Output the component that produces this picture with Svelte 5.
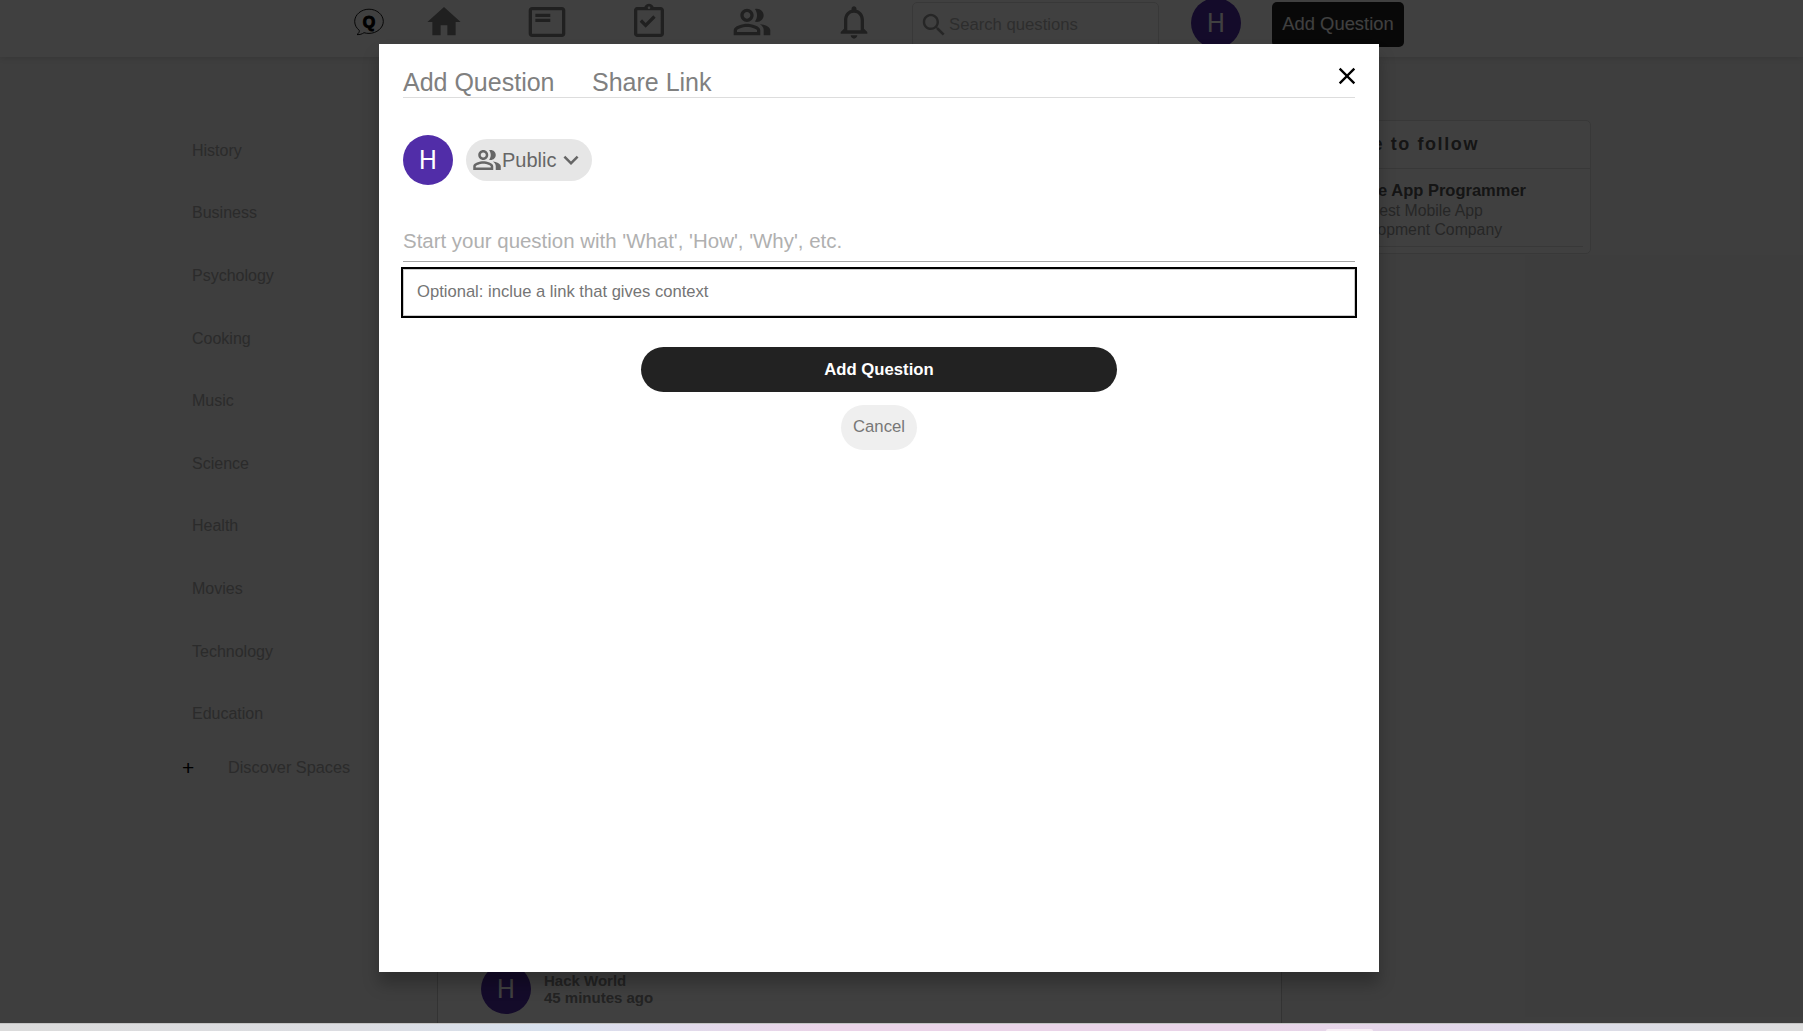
<script>
  // sidebar topics behind the modal
  const topics = ['History', 'Business', 'Psychology', 'Cooking', 'Music', 'Science', 'Health', 'Movies', 'Technology', 'Education'];

  const paths = {
    home: 'M10 20v-6h4v6h5v-8h3L12 3 2 12h3v8z',
    featured: 'M21 3H3c-1.1 0-2 .9-2 2v14c0 1.1.9 2 2 2h18c1.1 0 2-.9 2-2V5c0-1.1-.9-2-2-2zm0 16H3V5h18v14zM5 10h9v2H5zm0-3h9v2H5z',
    assignment: 'm16 9.41-1.41-1.42L10 12.58 7.83 10.4 6.41 11.8 10 15.4zM19 3h-4.18C14.4 1.84 13.3 1 12 1c-1.3 0-2.4.84-2.82 2H5c-.14 0-.27.01-.4.04-.39.08-.74.28-1.01.55-.18.18-.33.4-.43.64-.1.23-.16.49-.16.77v14c0 .27.06.54.16.78s.25.45.43.64c.27.27.62.47 1.01.55.13.02.26.03.4.03h14c1.1 0 2-.9 2-2V5c0-1.1-.9-2-2-2zm-7-.25c.41 0 .75.34.75.75s-.34.75-.75.75-.75-.34-.75-.75.34-.75.75-.75zM19 19H5V5h14v14z',
    people: 'M16.67 13.13C18.04 14.06 19 15.32 19 17v3h4v-3c0-2.18-3.57-3.47-6.33-3.87zM15 12c2.21 0 4-1.79 4-4s-1.79-4-4-4c-.47 0-.91.1-1.33.24C14.5 5.27 15 6.58 15 8s-.5 2.73-1.33 3.76c.42.14.86.24 1.33.24zM9 12c2.21 0 4-1.79 4-4s-1.79-4-4-4-4 1.79-4 4 1.79 4 4 4zm0-6c1.1 0 2 .9 2 2s-.9 2-2 2-2-.9-2-2 .9-2 2-2zM9 13c-2.67 0-8 1.34-8 4v3h16v-3c0-2.66-5.33-4-8-4zm6 5H3v-.99C3.2 16.29 6.3 15 9 15s5.8 1.29 6 2z',
    bell: 'M12 22c1.1 0 2-.9 2-2h-4c0 1.1.9 2 2 2zm6-6v-5c0-3.07-1.63-5.64-4.5-6.32V4c0-.83-.67-1.5-1.5-1.5s-1.5.67-1.5 1.5v.68C7.64 5.36 6 7.92 6 11v5l-2 2v1h16v-1l-2-2zm-2 1H8v-6c0-2.48 1.51-4.5 4-4.5s4 2.02 4 4.5v6z',
    search: 'M15.5 14h-.79l-.28-.27C15.41 12.59 16 11.11 16 9.5 16 5.91 13.09 3 9.5 3S3 5.91 3 9.5 5.91 16 9.5 16c1.61 0 3.09-.59 4.23-1.57l.27.28v.79l5 4.99L20.49 19l-4.99-5zm-6 0C7.01 14 5 11.99 5 9.5S7.01 5 9.5 5 14 7.01 14 9.5 11.99 14 9.5 14z',
    expand: 'M16.59 8.59L12 13.17 7.41 8.59 6 10l6 6 6-6z',
  };
  const navIcons = [paths.home, paths.featured, paths.assignment, paths.people, paths.bell];
</script>

<div class="screen">
  <div class="page">
    <header class="nav">
      <svg class="logo" viewBox="0 0 32 28" width="32" height="28">
        <path d="M16 1.2C8.3 1.2 1.7 6.600 1.700 13.400c0 3.600 1.800 6.800 4.600 9 .2 1.500-.6 3-2.300 4.200 2.800.2 5.200-.6 7-1.900 1.600.5 3.300.7 5 .7 7.700 0 14.300-5.500 14.300-12C30.300 6.600 23.700 1.200 16 1.200z" fill="none" stroke="#000" stroke-width="0.9" />
        <text x="16" y="19.5" text-anchor="middle">Q</text>
      </svg>
      <div class="nav-icons">
        {#each navIcons as d}
          <svg class="nav-icon" viewBox="0 0 24 24"><path {d} /></svg>
        {/each}
      </div>
      <div class="search">
        <svg viewBox="0 0 24 24"><path d={paths.search} /></svg>
        <span>Search questions</span>
      </div>
      <div class="avatar nav-avatar">H</div>
      <button class="nav-add" type="button">Add Question</button>
    </header>

    <div class="content">
      <aside class="sidebar">
        {#each topics as topic}
          <div class="topic">{topic}</div>
        {/each}
        <div class="discover"><span class="plus">+</span><span>Discover Spaces</span></div>
      </aside>

      <main class="feed">
        <div class="post-head">
          <div class="avatar">H</div>
          <div class="post-meta">
            <div>Hack World</div>
            <div>45 minutes ago</div>
          </div>
        </div>
      </main>

      <aside class="widget">
        <div class="widget-title">Space to follow</div>
        <div class="widget-body">
          <div class="widget-name">Mobile App Programmer</div>
          <div>The Best Mobile App</div>
          <div>Development Company</div>
        </div>
      </aside>
    </div>

    <div class="overlay">
      <div class="modal">
        <button class="close" type="button" aria-label="Close">
          <svg viewBox="0 0 36 36" width="28" height="28">
            <path d="M28.5 9.62L26.38 7.5 18 15.88 9.62 7.5 7.5 9.62 15.88 18 7.5 26.38l2.12 2.12L18 20.12l8.38 8.38 2.12-2.12L20.12 18z" />
          </svg>
        </button>
        <div class="tabs">
          <span>Add Question</span>
          <span>Share Link</span>
        </div>
        <div class="who">
          <div class="avatar">H</div>
          <div class="pill">
            <svg viewBox="0 0 24 24"><path d={paths.people} /></svg>
            <span>Public</span>
            <svg viewBox="0 0 24 24"><path d={paths.expand} /></svg>
          </div>
        </div>
        <input class="question" type="text" placeholder="Start your question with 'What', 'How', 'Why', etc." />
        <input class="link" type="text" placeholder="Optional: inclue a link that gives context" />
        <div class="actions">
          <button class="submit" type="button">Add Question</button>
          <button class="cancel" type="button">Cancel</button>
        </div>
      </div>
    </div>
  </div>

  <div class="taskbar"><span class="tab"></span></div>
</div>

<style>
  :global(body) {
    margin: 0;
    overflow: hidden;
    background: #f5f5f5;
    font-family: "Liberation Sans", Arial, sans-serif;
  }

  .screen {
    display: flex;
    flex-direction: column;
    height: 1031px;
  }
  .page {
    position: relative;
    flex: 1;
    display: flex;
    flex-direction: column;
    overflow: hidden;
  }

  /* top bar */
  .nav {
    flex-shrink: 0;
    display: flex;
    align-items: center;
    height: 57px;
    padding-left: 353px;
    background: #fff;
    box-shadow: 0 1px 6px rgba(0, 0, 0, 0.12);
    z-index: 1;
  }
  .logo {
    flex-shrink: 0;
    margin-top: -14px;
  }
  .logo text {
    font: bold 16px "Liberation Sans", Arial, sans-serif;
    stroke: #000;
    stroke-width: 1px;
    fill: #000;
  }
  .nav-icons {
    display: flex;
    gap: 62.5px;
    margin-left: 39px;
    margin-top: -13px;
  }
  .nav-icon {
    width: 40px;
    height: 40px;
    fill: #808080;
  }
  .search {
    display: flex;
    align-items: center;
    box-sizing: border-box;
    width: 247px;
    height: 46px;
    margin: -8px 0 0 38px;
    padding-left: 6px;
    border: 1px solid #ddd;
    border-radius: 5px;
    color: #b5b5b5;
    font-size: 16.7px;
  }
  .search svg {
    width: 30px;
    height: 30px;
    fill: #999;
  }
  .avatar {
    flex-shrink: 0;
    display: flex;
    align-items: center;
    justify-content: center;
    width: 50px;
    height: 50px;
    border-radius: 50%;
    background: #512da8;
    color: #fff;
    font: 25px Roboto, Arial, sans-serif;
  }
  .nav-avatar {
    margin: -11px 0 0 32px;
  }
  .nav-add {
    width: 132px;
    height: 45px;
    margin: -9px 0 0 31px;
    padding: 0;
    border: 0;
    border-radius: 5px;
    background: #222;
    color: #fff;
    font: 18.4px "Liberation Sans", Arial, sans-serif;
  }

  /* page behind the overlay */
  .content {
    flex: 1;
    display: flex;
  }
  .sidebar {
    box-sizing: border-box;
    width: 437px;
    padding: 62.6px 0 0 192px;
    color: #aaa;
    font-size: 16px;
  }
  .topic {
    display: flex;
    align-items: center;
    height: 62.6px;
  }
  .discover {
    display: flex;
    align-items: center;
    height: 44px;
    margin-left: -10px;
    font-size: 16.3px;
  }
  .plus {
    width: 46px;
    color: #000;
    font-size: 21px;
  }
  .feed {
    box-sizing: border-box;
    width: 845px;
    padding: 907px 0 0 43px;
    background: #fff;
    border: solid #ccc;
    border-width: 0 1px;
  }
  .post-head {
    display: flex;
    gap: 13px;
  }
  .post-meta {
    padding-top: 8px;
    color: #8a8a8a;
    font-size: 15px;
    font-weight: bold;
    line-height: 17px;
  }
  .widget {
    box-sizing: border-box;
    width: 281px;
    height: 134px;
    margin: 63px 0 0 28px;
    background: #fff;
    border: 1px solid #ddd;
    border-radius: 5px;
  }
  .widget-title {
    height: 47px;
    padding-left: 12px;
    border-bottom: 1px solid #ddd;
    color: #555;
    font-size: 18px;
    font-weight: bold;
    letter-spacing: 1.6px;
    line-height: 46px;
  }
  .widget-body {
    margin: 0 7px 0 26px;
    padding-top: 12px;
    height: 65px;
    border-bottom: 1px solid #ddd;
    color: #999;
    font-size: 15.8px;
    line-height: 19.5px;
  }
  .widget-name {
    margin-left: -2px;
    color: #555;
    font-size: 16.5px;
    font-weight: bold;
  }

  /* modal */
  .overlay {
    position: absolute;
    inset: 0;
    display: flex;
    justify-content: center;
    align-items: flex-start;
    background: rgba(0, 0, 0, 0.75);
    z-index: 2;
  }
  .modal {
    position: relative;
    box-sizing: border-box;
    display: flex;
    flex-direction: column;
    width: 1000px;
    height: 928px;
    margin: 44px 45px 0 0;
    padding: 24px;
    background: #fff;
    box-shadow: 0 12px 15px 0 rgba(0, 0, 0, 0.25);
  }
  .close {
    position: absolute;
    top: 18px;
    right: 18px;
    display: flex;
    padding: 0;
    border: 0;
    background: none;
  }
  .tabs {
    display: flex;
    gap: 37.5px;
    height: 29px;
    border-bottom: 1px solid #ddd;
    color: #808080;
    font-size: 25px;
    line-height: 29px;
  }
  .who {
    display: flex;
    align-items: center;
    gap: 13px;
    margin-top: 37px;
  }
  .pill {
    display: flex;
    align-items: center;
    box-sizing: border-box;
    width: 126px;
    height: 42px;
    padding-left: 6px;
    border-radius: 21px;
    background: #e6e6e6;
    color: #666;
    font-size: 20px;
  }
  .pill svg {
    width: 30px;
    height: 30px;
    fill: #666;
  }
  input {
    box-sizing: border-box;
    width: 100%;
    font-family: inherit;
    outline: none;
  }
  input::placeholder {
    opacity: 1;
  }
  .question {
    height: 52px;
    margin-top: 25px;
    padding: 10px 0 0;
    border: 0;
    border-bottom: 1px solid #a5a5a5;
    font-size: 20.45px;
  }
  .question::placeholder {
    color: #b0b0b0;
  }
  .link {
    height: 47px;
    margin-top: 7px;
    padding: 0 13px 2px;
    border: 1px solid #ccc;
    outline: 2px solid #000;
    font-size: 16.6px;
  }
  .link::placeholder {
    color: #757575;
  }
  .actions {
    display: flex;
    flex-direction: column;
    align-items: center;
    gap: 13px;
    margin-top: 31px;
  }
  .actions button {
    height: 45px;
    border: 0;
    border-radius: 22.5px;
    font-family: inherit;
    font-size: 16.7px;
  }
  .submit {
    width: 476px;
    background: #222;
    color: #fff;
    font-weight: bold;
  }
  .cancel {
    width: 76px;
    padding: 0 0 2px;
    background: #efefef;
    color: #777;
  }

  /* desktop strip under the browser page */
  .taskbar {
    flex-shrink: 0;
    display: flex;
    align-items: flex-end;
    box-sizing: border-box;
    height: 8px;
    padding-left: 1326px;
    border-top: 1px solid #c4c4c4;
    background: linear-gradient(90deg, #dbdbdb 0, #dcdde2 20%, #d8e1ee 30%, #ebd4e8 46%, #e9d4e8 70%, #e0d8ea 84%, #dcdde8 88%, #dddddd 100%);
  }
  .tab {
    width: 47px;
    height: 2px;
    border-radius: 3px 3px 0 0;
    background: #f7eef5;
  }
</style>
